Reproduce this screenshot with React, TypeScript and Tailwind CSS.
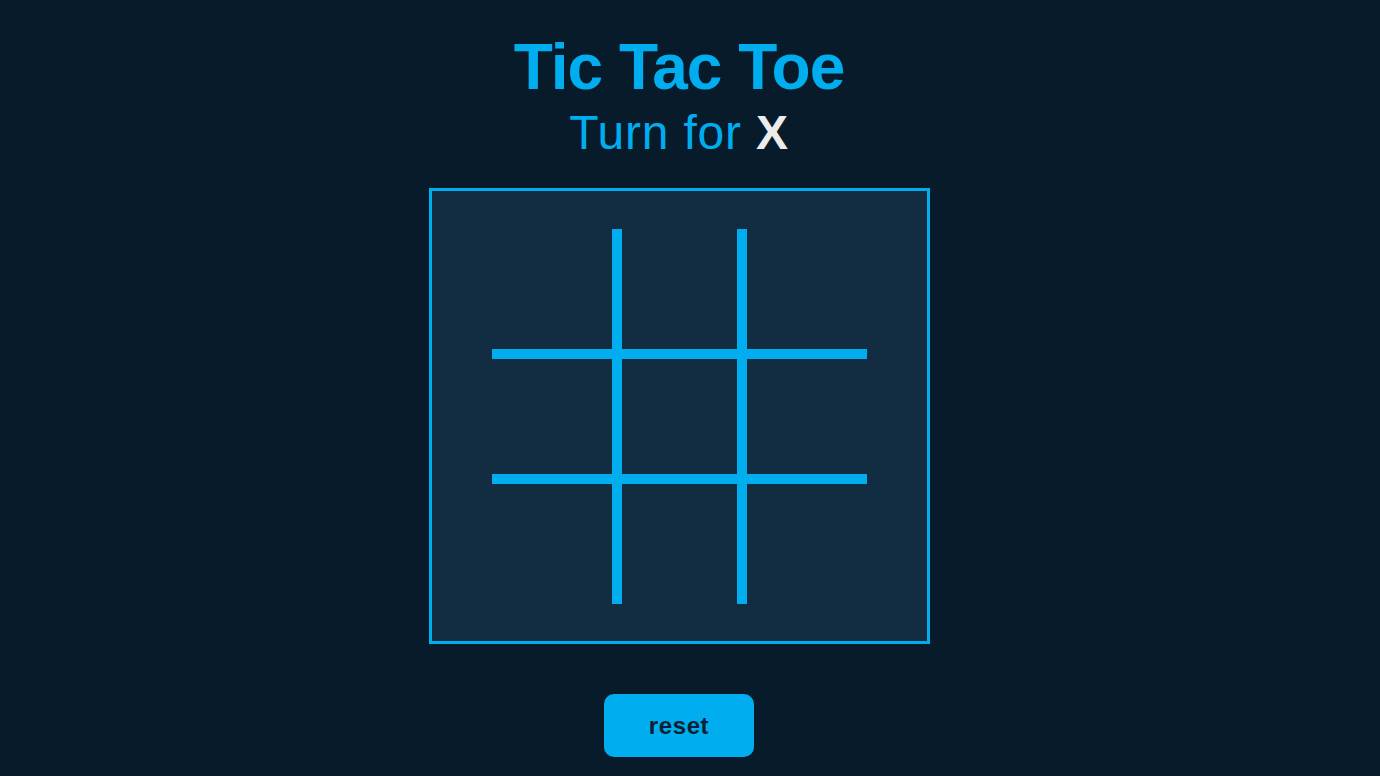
import React from "react";

const cellClasses = [
  "border-r-[5px] border-b-[5px]",
  "border-l-[5px] border-r-[5px] border-b-[5px]",
  "border-l-[5px] border-b-[5px]",
  "border-r-[5px] border-t-[5px] border-b-[5px]",
  "border-[5px]",
  "border-l-[5px] border-t-[5px] border-b-[5px]",
  "border-r-[5px] border-t-[5px]",
  "border-l-[5px] border-r-[5px] border-t-[5px]",
  "border-l-[5px] border-t-[5px]",
];

export default function App() {
  return (
    <div
      className="h-screen overflow-hidden bg-[#081b2a] flex flex-col items-center pt-[35px] pr-[22px]"
      style={{ fontFamily: '"Liberation Sans", Arial, sans-serif' }}
    >
      <h1 className="text-[64px] leading-none font-bold text-[#00adef] tracking-[-1px]">Tic Tac Toe</h1>
      <h2 className="mt-[10px] text-[48px] leading-none text-[#00adef] tracking-[0.8px]">
        Turn for <span className="font-bold text-[#ececec]">X</span>
      </h2>
      <div className="mt-[31px] w-[501px] h-[456px] border-[3px] border-[#00adef] bg-[#122d42] flex items-center justify-center">
        <div className="grid grid-cols-3 w-[375px] h-[375px]">
          {cellClasses.map((c, i) => (
            <div key={i} className={`w-[125px] h-[125px] border-[#00adef] ${c}`} />
          ))}
        </div>
      </div>
      <button className="mt-[50px] w-[150px] h-[63px] rounded-[10px] bg-[#00adef] text-[#0b2133] text-[24px] font-bold tracking-[0.6px]">
        reset
      </button>
    </div>
  );
}
